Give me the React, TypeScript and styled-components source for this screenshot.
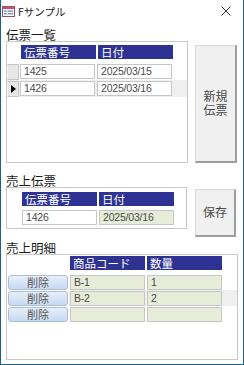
import { createGlobalStyle, styled } from "styled-components";

const GlobalStyle = createGlobalStyle`
  html, body { margin: 0; padding: 0; background: #fff; }
  body { font-family: "Liberation Sans", "Noto Sans CJK JP", sans-serif; }
`;

const Window = styled.div`
  width: 244px;
  height: 365px;
  box-sizing: border-box;
  border: 1px solid #1c5f8b;
  border-top: none;
  background: #fff;
  display: flex;
  flex-direction: column;
  overflow: hidden;
`;

const TitleBar = styled.div`
  height: 22px;
  display: flex;
  align-items: center;
  padding: 0 0 0 1px;
  flex-shrink: 0;
`;

const TitleText = styled.span`
  font-family: "Noto Sans CJK JP", sans-serif;
  font-size: 10.5px;
  color: #222;
  margin-left: 3px;
  flex: 1;
`;

const CloseBtn = styled.span`
  width: 30px;
  display: flex;
  justify-content: center;
  margin-right: 2px;
`;

const Body = styled.div`
  padding: 4px 0 0 5px;
  display: flex;
  flex-direction: column;
`;

const SectionLabel = styled.div<{ $top?: number }>`
  font-family: "Noto Sans CJK JP", sans-serif;
  font-size: 12.5px;
  line-height: 13px;
  height: 13px;
  color: #1a1a1a;
  margin-top: ${(p) => p.$top ?? 0}px;
`;

const Line = styled.div`
  display: flex;
  align-items: flex-start;
`;

const Frame = styled.div<{ $w: number; $h: number }>`
  width: ${(p) => p.$w}px;
  height: ${(p) => p.$h}px;
  box-sizing: border-box;
  border: 1px solid #c8c8c8;
  background: #fff;
  display: flex;
  flex-direction: column;
`;

const HeaderRow = styled.div<{ $left: number; $top: number }>`
  display: flex;
  gap: 2px;
  padding-left: ${(p) => p.$left}px;
  margin-top: ${(p) => p.$top}px;
`;

const HeadCell = styled.div`
  width: 75px;
  height: 14px;
  box-sizing: border-box;
  background: #2e3393;
  color: #fff;
  font-family: "Noto Sans CJK JP", sans-serif;
  font-size: 11.5px;
  line-height: 14px;
  padding-left: 3px;
  white-space: nowrap;
`;

const RecordRow = styled.div<{ $current?: boolean; $top?: number }>`
  display: flex;
  align-items: center;
  height: 17px;
  margin-top: ${(p) => p.$top ?? 0}px;
  background: ${(p) => (p.$current ? "#efefef" : "transparent")};
`;

const Selector = styled.div`
  width: 12px;
  height: 16px;
  box-sizing: border-box;
  background: #e6e6e6;
  border: 1px solid #c4c4c4;
  border-left-color: #f4f4f4;
  margin-right: 1px;
  display: flex;
  align-items: center;
  justify-content: center;
`;

const Cells = styled.div<{ $left?: number; $top?: number }>`
  display: flex;
  gap: 2px;
  padding-left: ${(p) => p.$left ?? 0}px;
  margin-top: ${(p) => p.$top ?? 0}px;
`;

const Field = styled.div<{ $locked?: boolean }>`
  width: 75px;
  height: 15px;
  box-sizing: border-box;
  border: 1px solid #c6c6c6;
  background: ${(p) => (p.$locked ? "#e6ecd8" : "#fff")};
  color: #4a4a4a;
  font-size: 10.5px;
  line-height: 13px;
  padding-left: 3px;
  letter-spacing: -0.2px;
`;

const BigButton = styled.div<{ $w: number; $h: number; $top: number; $left: number }>`
  width: ${(p) => p.$w}px;
  height: ${(p) => p.$h}px;
  margin-top: ${(p) => p.$top}px;
  margin-left: ${(p) => p.$left}px;
  box-sizing: border-box;
  background: #f0f0f0;
  border: 1px solid #d8d8d8;
  border-right: 2px solid #9d9d9d;
  border-bottom: 2px solid #9d9d9d;
  display: flex;
  flex-direction: column;
  align-items: center;
  justify-content: center;
  font-family: "Liberation Sans", "Noto Sans CJK JP", sans-serif;
  font-size: 12px;
  line-height: 14px;
  color: #4a4a4a;
`;

const ButtonLine = styled.span`
  display: block;
  height: 14px;
  line-height: 14px;
`;

const DetailRow = styled.div<{ $current?: boolean; $top?: number }>`
  display: flex;
  align-items: center;
  gap: 2px;
  height: 16px;
  padding-left: 1px;
  margin-top: ${(p) => p.$top ?? 0}px;
  background: ${(p) =>
    p.$current
      ? "linear-gradient(to right, transparent 62px, #efefef 62px)"
      : "transparent"};
`;

const DeleteButton = styled.div`
  width: 60px;
  height: 15px;
  box-sizing: border-box;
  border: 1px solid #a9bfd9;
  border-radius: 3px;
  background: linear-gradient(#e7eff9, #c6d9f0);
  color: #555;
  font-family: "Noto Sans CJK JP", sans-serif;
  font-size: 11px;
  line-height: 13px;
  text-align: center;
`;

function FormIcon() {
  return (
    <svg width="13" height="11" viewBox="0 0 13 11">
      <rect x="0.5" y="0.5" width="12" height="10" fill="#fff" stroke="#a0485e" />
      <rect x="0.5" y="0.5" width="12" height="2.5" fill="#c0506b" />
      <rect x="2" y="4.5" width="2.5" height="1.2" fill="#5b7fb8" />
      <rect x="5.5" y="4.5" width="5.5" height="1.2" fill="#5b7fb8" />
      <rect x="2" y="7.2" width="2.5" height="1.2" fill="#5b7fb8" />
      <rect x="5.5" y="7.2" width="5.5" height="1.2" fill="#5b7fb8" />
    </svg>
  );
}

interface Slip {
  no: string;
  date: string;
}

interface Detail {
  code: string;
  qty: string;
}

const slips: Slip[] = [
  { no: "1425", date: "2025/03/15" },
  { no: "1426", date: "2025/03/16" },
];

const details: Detail[] = [
  { code: "B-1", qty: "1" },
  { code: "B-2", qty: "2" },
  { code: "", qty: "" },
];

export default function App() {
  return (
    <>
      <GlobalStyle />
      <Window>
        <TitleBar>
          <FormIcon />
          <TitleText>Fサンプル</TitleText>
          <CloseBtn>
            <svg width="10" height="10" viewBox="0 0 10 10">
              <path d="M0.5 0.5 L9.5 9.5 M9.5 0.5 L0.5 9.5" stroke="#333" strokeWidth="1" />
            </svg>
          </CloseBtn>
        </TitleBar>
        <Body>
          <SectionLabel $top={2}>伝票一覧</SectionLabel>
          <Line>
            <Frame $w={182} $h={122}>
              <HeaderRow $left={14} $top={3}>
                <HeadCell>伝票番号</HeadCell>
                <HeadCell>日付</HeadCell>
              </HeaderRow>
              {slips.map((s, i) => (
                <RecordRow key={s.no} $current={i === 1} $top={i === 0 ? 4 : 0}>
                  <Selector>
                    {i === 1 && (
                      <svg width="5" height="8" viewBox="0 0 5 8">
                        <path d="M0 0 L5 4 L0 8 Z" fill="#000" />
                      </svg>
                    )}
                  </Selector>
                  <Cells>
                    <Field>{s.no}</Field>
                    <Field>{s.date}</Field>
                  </Cells>
                </RecordRow>
              ))}
            </Frame>
            <BigButton $w={42} $h={118} $top={4} $left={7}>
              <ButtonLine>新規</ButtonLine>
              <ButtonLine>伝票</ButtonLine>
            </BigButton>
          </Line>

          <SectionLabel $top={11}>売上伝票</SectionLabel>
          <Line>
            <Frame $w={181} $h={42}>
              <HeaderRow $left={15} $top={4}>
                <HeadCell>伝票番号</HeadCell>
                <HeadCell>日付</HeadCell>
              </HeaderRow>
              <Cells $left={15} $top={4}>
                <Field>1426</Field>
                <Field $locked>2025/03/16</Field>
              </Cells>
            </Frame>
            <BigButton $w={41} $h={48} $top={2} $left={8}>
              <ButtonLine>保存</ButtonLine>
            </BigButton>
          </Line>

          <SectionLabel $top={4}>売上明細</SectionLabel>
          <Frame $w={232} $h={106}>
            <HeaderRow $left={63} $top={1}>
              <HeadCell>商品コード</HeadCell>
              <HeadCell>数量</HeadCell>
            </HeaderRow>
            {details.map((d, i) => (
              <DetailRow key={i} $current={i === 1} $top={i === 0 ? 4 : 0}>
                <DeleteButton>削除</DeleteButton>
                <Field $locked>{d.code}</Field>
                <Field $locked>{d.qty}</Field>
              </DetailRow>
            ))}
          </Frame>
        </Body>
      </Window>
    </>
  );
}
